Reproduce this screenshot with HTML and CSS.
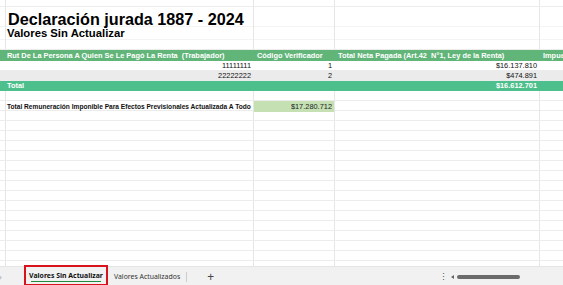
FILE: index.html
```html
<!DOCTYPE html>
<html lang="es">
<head>
    <meta charset="UTF-8">
    <title>Declaración jurada 1887 - 2024</title>
    <link rel="stylesheet" href="styles.css">
</head>
<body>
    <div class="sheet">
        <div class="row h7"><div></div><div></div><div></div><div></div><div></div></div>
        <div class="row h20 plain"><div></div><div class="title">Declaración jurada 1887 - 2024</div><div></div><div></div><div></div></div>
        <div class="row h13"><div></div><div class="subtitle">Valores Sin Actualizar</div><div></div><div></div><div></div></div>
        <div class="row h10"><div></div><div></div><div></div><div></div><div></div></div>
        <div class="row h11 head">
            <div></div>
            <div>Rut De La Persona A Quien Se Le Pagó La Renta&nbsp; (Trabajador)</div>
            <div>Código Verificador</div>
            <div>Total Neta Pagada (Art.42&nbsp; N°1, Ley de la Renta)</div>
            <div>Impuesto Único Retenido</div>
        </div>
        <div class="row h10 data">
            <div></div><div class="num">11111111</div><div class="num">1</div><div class="num">$16.137.810</div><div></div>
        </div>
        <div class="row h10 data alt">
            <div></div><div class="num">22222222</div><div class="num">2</div><div class="num">$474.891</div><div></div>
        </div>
        <div class="row h10 total">
            <div></div><div>Total</div><div></div><div class="num">$16.612.701</div><div></div>
        </div>
        <div class="row h10"><div></div><div></div><div></div><div></div><div></div></div>
        <div class="row h10 label-row">
            <div></div><div class="label">Total Remuneración Imponible Para Efectos Previsionales Actualizada A Todo</div><div class="num mark">$17.280.712</div><div></div><div></div>
        </div>
        <div class="row h10"><div></div><div></div><div></div><div></div><div></div></div>
        <div class="row h10"><div></div><div></div><div></div><div></div><div></div></div>
        <div class="row h10"><div></div><div></div><div></div><div></div><div></div></div>
        <div class="row h10"><div></div><div></div><div></div><div></div><div></div></div>
        <div class="row h10"><div></div><div></div><div></div><div></div><div></div></div>
        <div class="row h10"><div></div><div></div><div></div><div></div><div></div></div>
        <div class="row h10"><div></div><div></div><div></div><div></div><div></div></div>
        <div class="row h10"><div></div><div></div><div></div><div></div><div></div></div>
        <div class="row h10"><div></div><div></div><div></div><div></div><div></div></div>
        <div class="row h10"><div></div><div></div><div></div><div></div><div></div></div>
        <div class="row h10"><div></div><div></div><div></div><div></div><div></div></div>
        <div class="row h10"><div></div><div></div><div></div><div></div><div></div></div>
        <div class="row h10"><div></div><div></div><div></div><div></div><div></div></div>
        <div class="row h10"><div></div><div></div><div></div><div></div><div></div></div>
        <div class="row h10"><div></div><div></div><div></div><div></div><div></div></div>
        <div class="row h10"><div></div><div></div><div></div><div></div><div></div></div>
    </div>

    <div class="tabs">
        <span class="nav-left">›</span>
        <div class="tab active">Valores Sin Actualizar</div>
        <div class="tab">Valores Actualizados</div>
        <span class="add">+</span>
        <div class="scroll">
            <span class="dots">⋮</span>
            <span class="arrow"></span>
            <span class="thumb"></span>
        </div>
    </div>
</body>
</html>
```

FILE: styles.css
```css
body {
    margin: 0;
    width: 563px;
    height: 285px;
    overflow: hidden;
    font-family: "Liberation Sans", Arial, sans-serif;
    background: #fff;
}
.sheet {
    height: 266px;
    overflow: hidden;
}
.row {
    display: grid;
    grid-template-columns: 4px 250px 81px 205px 60px;
    box-sizing: border-box;
    border-bottom: 1px solid #ececec;
}
.row > div {
    border-right: 1px solid #e6e6e6;
    box-sizing: border-box;
    white-space: nowrap;
    overflow: visible;
    padding: 0 2px 0 3px;
    font-size: 7.4px;
    line-height: 10px;
}
.h7 { height: 7px; }
.h10 { height: 10px; }
.h11 { height: 11px; }
.h13 { height: 13px; }
.h20 { height: 20px; }

.plain, .h13 { border-bottom-color: #f4f4f4; }
.title {
    font-size: 16.2px !important;
    font-weight: bold;
    line-height: 20px !important;
    padding-top: 2px !important;
    padding-left: 4px !important;
    position: relative;
    z-index: 1;
}
.subtitle {
    font-size: 11.3px !important;
    font-weight: bold;
    line-height: 13px !important;
}

.head {
    background: #62b579;
    border-bottom: none;
}
.head > div {
    color: #fff;
    font-weight: bold;
    border-right-color: #62b579;
    line-height: 11px;
}
.data > div {
    border-right-color: transparent;
    color: #111;
}
.alt { background: #ebebeb; }
.total {
    background: #4dbf8c;
    border-bottom: none;
}
.total > div {
    color: #fff;
    font-weight: bold;
    border-right-color: #4dbf8c;
}
.num { text-align: right; }
.label {
    font-weight: bold;
    color: #111;
    font-size: 6.6px !important;
    padding-top: 1px !important;
}
.mark {
    background: #c5e1b4;
    color: #222;
    padding-top: 1px !important;
}

.tabs {
    height: 19px;
    background: #f1f1f1;
    border-top: 1px solid #e4e4e4;
    display: flex;
    align-items: center;
    font-family: "Noto Sans", sans-serif;
    font-size: 6.9px;
    color: #333;
}
.nav-left {
    color: #aaa;
    font-size: 9px;
    width: 25px;
    margin-left: -1px;
}
.tab {
    height: 18px;
    display: flex;
    align-items: center;
    white-space: nowrap;
    padding: 0 6px;
}
.tab.active {
    font-weight: bold;
    color: #111;
    border: 2px solid #d8131c;
    box-sizing: border-box;
    height: 21px;
    width: 84px;
    margin-top: -3px;
    justify-content: center;
    padding: 0;
    position: relative;
    background: #f1f1f1;
}
.tab.active::after {
    content: "";
    position: absolute;
    left: 5px;
    right: 5px;
    bottom: 2px;
    height: 1px;
    background: #1e8e3e;
}
.tab:nth-child(3) {
    border-right: 1px solid #ccc;
    height: 10px;
}
.add {
    font-size: 12px;
    color: #444;
    margin-left: 20px;
}
.scroll {
    margin-left: auto;
    width: 124px;
    display: flex;
    align-items: center;
}
.dots {
    color: #555;
    font-size: 9px;
    width: 12px;
}
.arrow {
    width: 0;
    height: 0;
    border-top: 2px solid transparent;
    border-bottom: 2px solid transparent;
    border-right: 3px solid #666;
    margin-right: 3px;
}
.thumb {
    width: 63px;
    height: 4px;
    border-radius: 2px;
    background: #6c6c6c;
}
```
